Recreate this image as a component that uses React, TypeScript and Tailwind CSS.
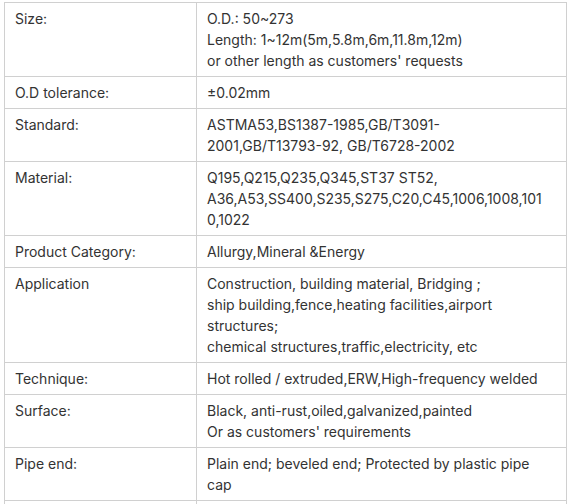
import React from "react";

const rows: [string, string[]][] = [
  ["Size:", ["O.D.: 50~273", "Length: 1~12m(5m,5.8m,6m,11.8m,12m)", "or other length as customers' requests"]],
  ["O.D tolerance:", ["±0.02mm"]],
  ["Standard:", ["ASTMA53,BS1387-1985,GB/T3091-", "2001,GB/T13793-92, GB/T6728-2002"]],
  ["Material:", ["Q195,Q215,Q235,Q345,ST37 ST52,", "A36,A53,SS400,S235,S275,C20,C45,1006,1008,101", "0,1022"]],
  ["Product Category:", ["Allurgy,Mineral &Energy"]],
  ["Application", ["Construction, building material, Bridging ;", "ship building,fence,heating facilities,airport", "structures;", "chemical structures,traffic,electricity, etc"]],
  ["Technique:", ["Hot rolled / extruded,ERW,High-frequency welded"]],
  ["Surface:", ["Black, anti-rust,oiled,galvanized,painted", "Or as customers' requirements"]],
  ["Pipe end:", ["Plain end; beveled end; Protected by plastic pipe", "cap"]],
  ["", [""]],
];

export default function App() {
  return (
    <div className="w-[572px] h-[504px] overflow-hidden bg-white pt-[2px] pl-[4px]" style={{ fontFamily: "Inter, 'Noto Sans', sans-serif" }}>
      <div className="w-[563px] border-t border-l border-[#d0d0d0] text-[14px] leading-[21px] text-[#333333]">
        {rows.map(([k, v], i) => (
          <div key={i} className="grid grid-cols-[192px_370px]">
            <div className="border-r border-b border-[#d0d0d0] px-[10px] py-[5px]">{k}</div>
            <div className="border-r border-b border-[#d0d0d0] px-[10px] py-[5px]">
              {v.map((line, j) => (
                <div key={j} className="whitespace-nowrap min-h-[21px]">{line}</div>
              ))}
            </div>
          </div>
        ))}
      </div>
    </div>
  );
}
